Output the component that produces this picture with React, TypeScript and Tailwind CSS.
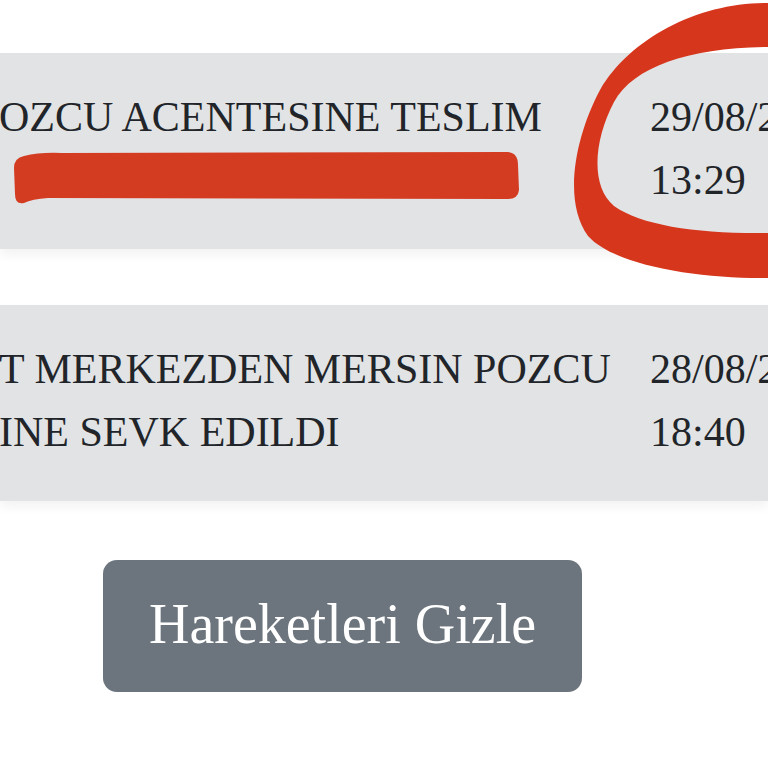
import React from "react";

type Movement = {
  lines: string[];
  date: string;
  time: string;
};

// second line of the first row is hidden under the marker stroke
const movements: Movement[] = [
  { lines: ["OZCU ACENTESINE TESLIM", "\u00a0"], date: "29/08/2023", time: "13:29" },
  { lines: ["T MERKEZDEN MERSIN POZCU", "INE SEVK EDILDI"], date: "28/08/2023", time: "18:40" },
];

function MovementRow({ item }: { item: Movement }) {
  return (
    <div className="flex h-[196px] w-full bg-[#e2e3e5] pt-[33px] text-[42px] leading-[63px] text-[#212529] shadow-[0_6px_10px_rgba(0,0,0,0.05)]">
      <div className="-ml-[1px] w-[651px] shrink-0 whitespace-nowrap">
        {item.lines.map((l, i) => (
          <div key={i}>{l}</div>
        ))}
      </div>
      <div className="whitespace-nowrap">
        <div>{item.date}</div>
        <div>{item.time}</div>
      </div>
    </div>
  );
}

export default function App() {
  return (
    <div
      className="relative h-[768px] w-[768px] overflow-hidden bg-white"
      style={{ fontFamily: '"Liberation Serif", "Times New Roman", serif' }}
    >
      <div className="flex flex-col gap-[56px] pt-[53px]">
        {movements.map((m) => (
          <MovementRow key={m.date} item={m} />
        ))}
      </div>

      <div className="mt-[59px] pl-[103px]">
        <button className="flex h-[132px] w-[479px] items-center justify-center rounded-[14px] bg-[#6c757d] pb-[4px] text-[56px] text-white">
          Hareketleri Gizle
        </button>
      </div>

      {/* marker scribbles over the screenshot */}
      <svg
        className="pointer-events-none absolute inset-0"
        width="768"
        height="768"
        viewBox="0 0 768 768"
      >
        <path
          d="M24,156 Q40,152 62,153 L508,152 Q518,153 518,165 L519,190 Q518,199 508,199 L48,198 Q32,199 24,203 Q15,205 15,194 L14,168 Q14,158 24,156 Z"
          fill="#d43c22"
        />
        <path
          fillRule="evenodd"
          d="M768,3 C700,2 630,38 600,90 C576,135 562,200 588,236 C615,266 700,279 768,278 L768,233 C700,234 642,226 614,206 C590,186 594,140 614,102 C634,66 690,48 768,47 Z"
          fill="#d6361c"
        />
      </svg>
    </div>
  );
}
